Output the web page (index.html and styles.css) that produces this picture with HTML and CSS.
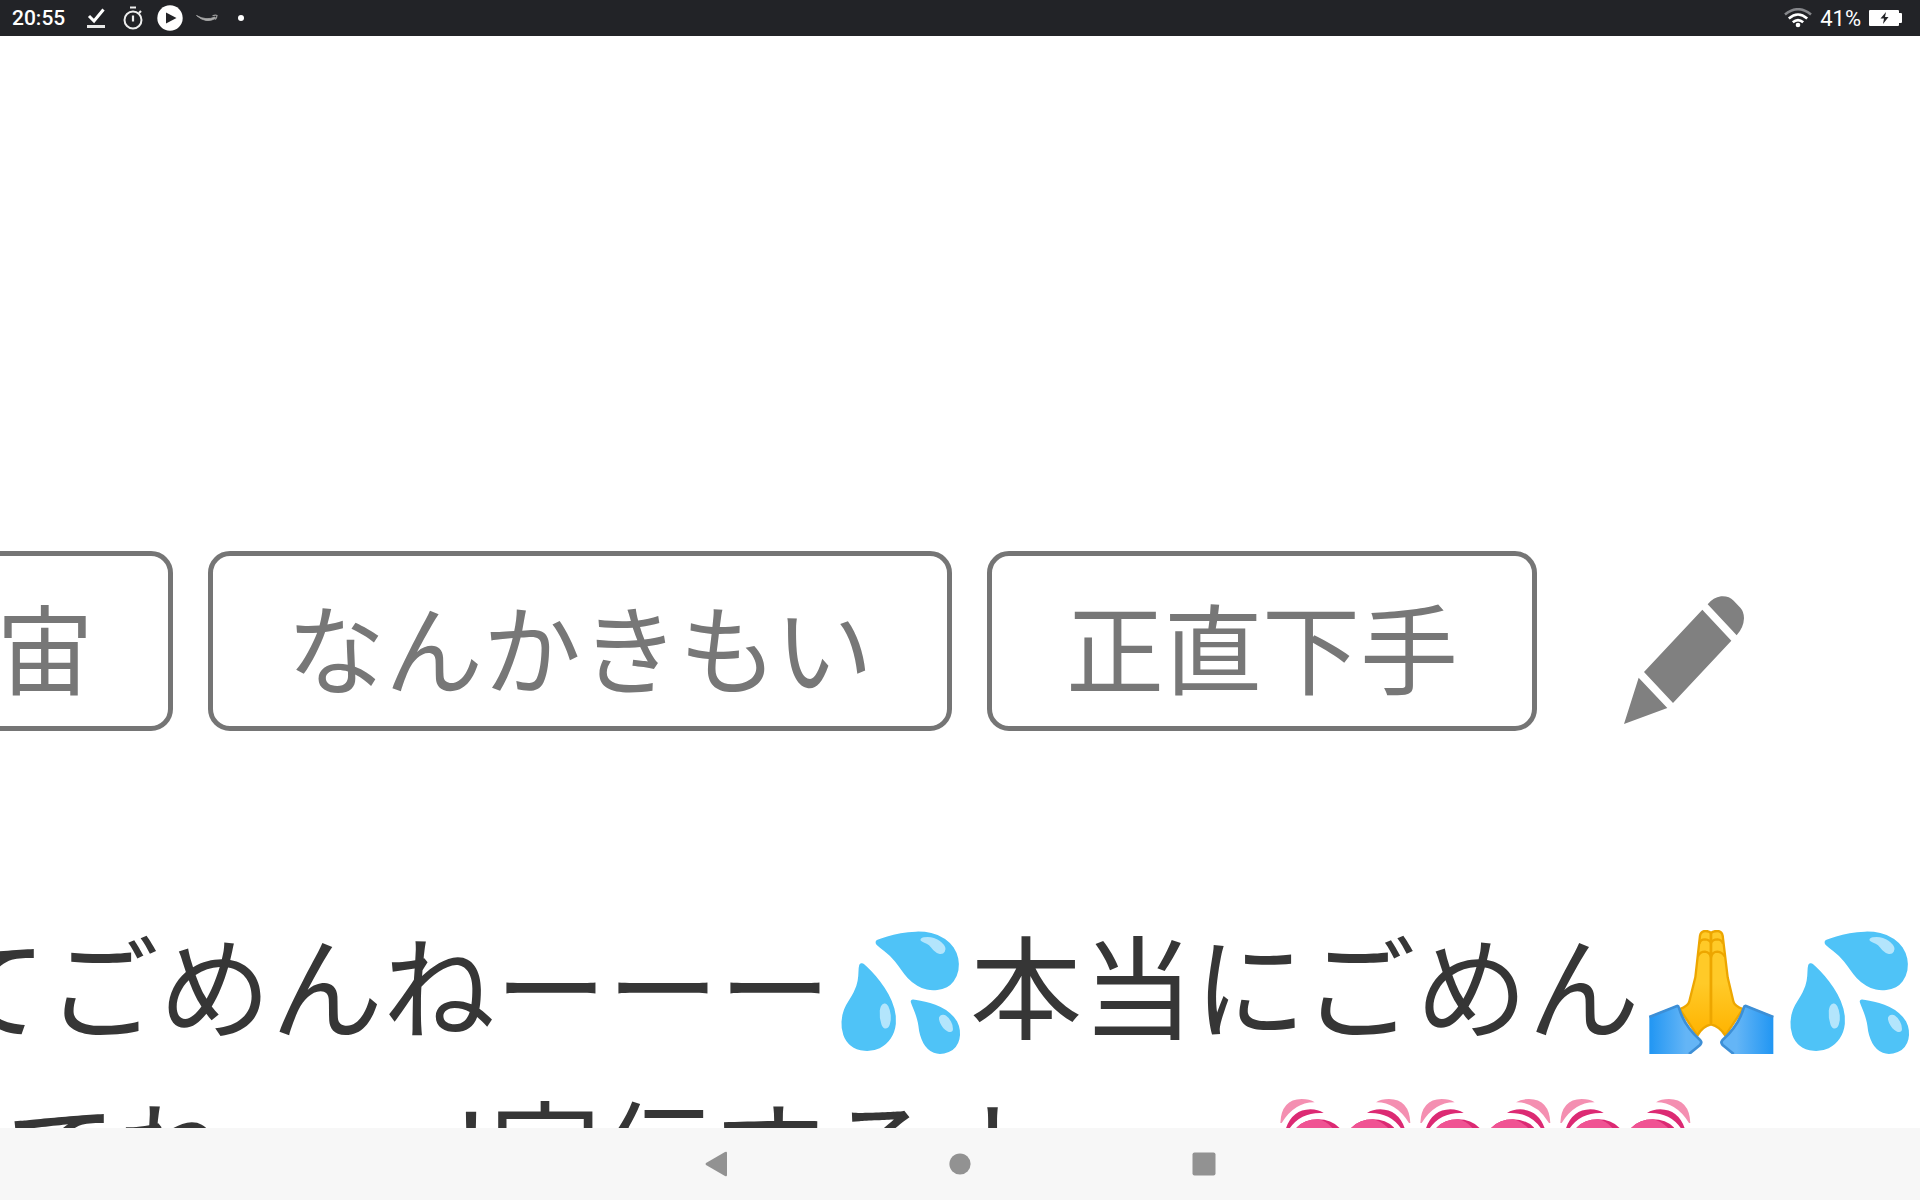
FILE: index.html
```html
<!DOCTYPE html>
<html lang="ja">
<head>
    <meta charset="UTF-8">
    <meta name="viewport" content="width=device-width, initial-scale=1.0">
    <title>コメント</title>
    <link rel="stylesheet" href="styles.css">
</head>
<body>

    <header class="status-bar">
        <span class="clock">20:55</span>
        <div class="status-icons">
            <svg width="18" height="20" viewBox="0 0 18 20"><path d="M2 8l5 5L16.500 1.500" fill="none" stroke="#fff" stroke-width="3"/><path d="M0 17h18v3H0z" fill="#e8e8e8"/></svg>
            <svg width="20" height="24" viewBox="0 0 20 24"><circle cx="10" cy="14" r="8.500" fill="none" stroke="#eee" stroke-width="2"/><path d="M7 1.500h6M10 9.500v6M16 7l2-2" fill="none" stroke="#eee" stroke-width="2.200"/></svg>
            <svg width="26" height="26" viewBox="0 0 26 26"><circle cx="13" cy="13" r="12.700" fill="#fff"/><path d="M9 7.500v11l10.500-5.500z" fill="#222327"/></svg>
            <svg width="22" height="8" viewBox="0 0 22 8"><path d="M.500 1.500Q10 7 19 3l.500 1.500Q10 10 .500 1.500z" fill="#aaa" stroke="#aaa" stroke-width=".8"/><path d="M16.500 1.800q3-1 4.500-.3 0 2-1.800 4" fill="none" stroke="#999" stroke-width="1.200"/></svg>
            <svg width="6" height="6" viewBox="0 0 6 6"><circle cx="3" cy="3" r="3" fill="#fff"/></svg>
        </div>
        <div class="status-right">
            <svg width="28" height="20" viewBox="0 0 28 20"><g fill="none" stroke-width="2.600"><path d="M1 6.500Q14-4 27 6.500" stroke="#85868a"/><path d="M4.800 10.500Q14 2.500 23.200 10.500M8.800 14.300Q14 9.800 19.200 14.300" stroke="#fff"/></g><circle cx="14" cy="17" r="2.300" fill="#fff"/></svg>
            <span class="battery-level">41%</span>
            <svg width="33" height="16" viewBox="0 0 33 16"><path d="M1 0h28q1 0 1 1v2h2q1 0 1 1v8q0 1-1 1h-2v2q0 1-1 1H1q-1 0-1-1V1q0-1 1-1z" fill="#fff"/><path d="M17 2l-5.500 6.500h3.500L14 14l5.500-7H16z" fill="#222327"/></svg>
        </div>
    </header>

    <main class="page">
        <div class="tags">
            <button class="tag">宇宙</button>
            <button class="tag">なんかきもい</button>
            <button class="tag">正直下手</button>
            <button class="edit" aria-label="編集">
                <svg width="120" height="128" viewBox="198 107 360 384" fill="#808080"><path d="M449 132Q466 111 489 108Q512 106 527 121L547 142Q558 154 558 174Q557 202 536 225zM433 148L520 241L345 428L258 335zM242 352L328 443L198 491z"/></svg>
            </button>
        </div>
        <p class="comment">てごめんねーーー💦本当にごめん<svg class="emoji" viewBox="39 63 420 372" role="img" aria-label="合掌">
            <defs>
                <linearGradient id="skin" x1="0" y1="0" x2="0" y2="1"><stop offset=".5" stop-color="#ffca28"/><stop offset="1" stop-color="#ffb300"/></linearGradient>
                <linearGradient id="sleeve-left"><stop offset="0" stop-color="#2196f3"/><stop offset=".7" stop-color="#64b5f6"/></linearGradient>
                <linearGradient id="sleeve-right"><stop offset=".3" stop-color="#64b5f6"/><stop offset="1" stop-color="#2196f3"/></linearGradient>
            </defs>
            <g fill="url(#skin)" stroke="#eda600" stroke-width="7" stroke-linejoin="round">
                <path d="M252 346Q226 352 211 380L158 300Q184 292 187 277L205 205L219 80Q222 66 235 66Q249 66 252 74z"/>
                <path d="M252 346Q278 352 295 380L348 300Q322 292 319 277L302 205L287 80Q284 66 271 66Q255 66 252 74z"/>
            </g>
            <path d="M252 72V344M217 104Q220 91 234 91Q249 92 252 103Q256 91 271 91Q285 92 288 104M213 142Q219 128 234 128Q249 130 252 146Q256 128 271 128Q286 130 293 142" fill="none" stroke="#eda600" stroke-width="7"/>
            <path d="M67 322L150 289Q155 288 157 297Q172 350 222 392Q228 400 221 408L188 435H67z" fill="url(#sleeve-left)"/>
            <path d="M439 322L357 289Q351 288 349 297Q334 350 284 392Q278 400 285 408L318 435H439z" fill="url(#sleeve-right)"/>
            <path d="M67 324L150 291Q154 290 156 297Q171 350 220 394Q226 400 219 408L186 435M439 324L357 291Q352 290 350 297Q335 350 286 394Q280 400 287 408L320 435" fill="none" stroke="#3d8fd6" stroke-width="8"/>
        </svg>💦
            <span class="line-two">てねーー!宣伝するよーー<svg class="emoji" viewBox="100 47 420 372" role="img" aria-label="ハート">
                <g id="heart">
                    <path d="M122 131Q125 60 186 59Q210 59 225 69Q165 68 126 131zM512 131Q509 60 448 59Q424 59 409 69Q469 68 508 131z" fill="#f48fb1"/>
                    <path d="M130 190Q140 92 212 90Q235 90 252 101Q160 95 130 190zM504 190Q494 92 422 90Q399 90 382 101Q474 95 504 190z" fill="#dc2a73"/>
                    <path d="M317 170Q290 120 235 120Q195 120 172 144C130 200 170 300 317 400C464 300 504 200 462 144Q439 120 399 120Q344 120 317 170z" fill="#dc2a73"/>
                    <path d="M305 190Q275 125 235 120Q195 120 172 144C130 200 170 290 305 380C450 290 490 200 443 144Q420 123 399 120Q344 120 317 170z" fill="#f05393"/>
                </g>
            </svg><svg class="emoji" viewBox="100 47 420 372" role="img" aria-label="ハート"><use href="#heart"/></svg><svg class="emoji" viewBox="100 47 420 372" role="img" aria-label="ハート"><use href="#heart"/></svg></span>
        </p>
    </main>

    <nav class="nav-bar">
        <button class="nav-button" aria-label="戻る"><svg width="24" height="26" viewBox="0 0 24 26"><path d="M21 1q2-1 2 1v22q0 2-2 1L2 14q-1-1 0-2z"/></svg></button>
        <button class="nav-button" aria-label="ホーム"><svg width="24" height="24" viewBox="0 0 24 24"><circle cx="12" cy="12" r="10.600"/></svg></button>
        <button class="nav-button" aria-label="履歴"><svg width="24" height="24" viewBox="0 0 24 24"><rect x=".5" y=".5" width="23" height="23" rx="2"/></svg></button>
    </nav>

</body>
</html>
```
FILE: styles.css
```css
* { box-sizing: border-box; }
body { margin: 0; height: 100vh; display: flex; flex-direction: column; overflow: hidden; background: #fff; font-family: "Noto Sans CJK JP", sans-serif; }
button { font: inherit; margin: 0; padding: 0; border: none; background: none; cursor: pointer; }
svg { display: block; flex: none; }

.status-bar { display: flex; align-items: center; flex: none; height: 36px; padding: 0 18px 0 12px; background: #222327; color: #fff; font-family: Roboto, sans-serif; }
.clock { font-size: 21px; font-weight: 500; margin-right: 12px; }
.status-icons { display: grid; grid-template-columns: repeat(4, 37px) 32px; align-items: center; justify-items: center; }
.status-right { display: flex; align-items: center; gap: 8px; margin-left: auto; }
.battery-level { font-size: 22px; }

.page { flex: 1; min-height: 0; overflow: hidden; padding-top: 515px; }
.tags { display: flex; align-items: flex-start; gap: 35px; margin-left: -181px; }
.tag {
    flex: none; height: 180px; padding: 6px 74px 0; border: 5px solid #757575; border-radius: 22px;
    color: #777; font-size: 98px; line-height: 140px; white-space: nowrap;
}
.edit { flex: none; margin: 0 52px; padding-top: 45px; }
.comment { margin: 169px 0 0 -65px; color: #363636; font-size: 112px; line-height: 165px; white-space: nowrap; }
.line-two { display: block; padding-left: 70px; }
.emoji { display: inline-block; width: 140px; height: 124px; vertical-align: -23px; }

.nav-bar { display: flex; justify-content: center; flex: none; height: 72px; background: #f7f7f7; }
.nav-button { display: flex; align-items: center; justify-content: center; width: 244px; }
.nav-button svg { fill: #929292; }
```
